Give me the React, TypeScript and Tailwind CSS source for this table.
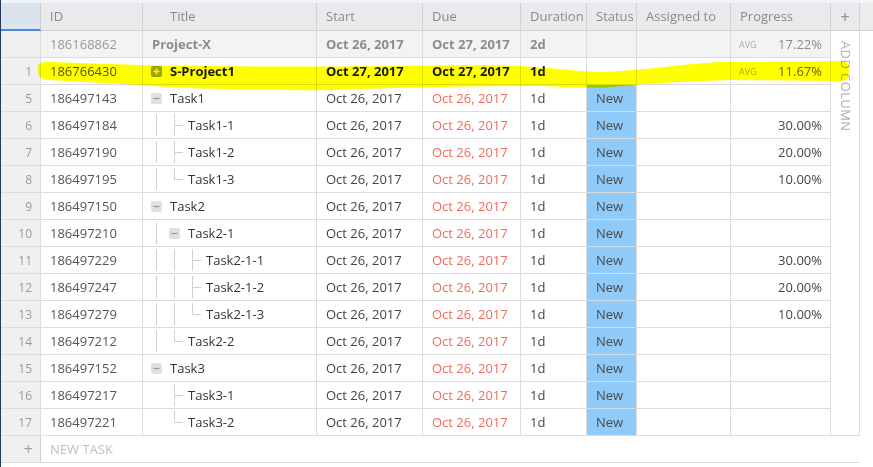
import React from 'react';

type Guide = 'line' | 'tee' | 'corner' | 'none';
type Marker = 'plus' | 'minus' | 'tee' | 'corner';

type Row = {
  num: string;
  id: string;
  title: string;
  guides: Guide[];
  marker?: Marker;
  start: string;
  due: string;
  duration: string;
  status?: string;
  progress?: string;
  avg?: string;
  bold?: boolean;
};

const task = (
  num: string,
  id: string,
  title: string,
  guides: Guide[],
  marker: Marker,
  progress?: string,
): Row => ({
  num,
  id,
  title,
  guides,
  marker,
  start: 'Oct 26, 2017',
  due: 'Oct 26, 2017',
  duration: '1d',
  status: 'New',
  progress,
});

const rows: Row[] = [
  {
    num: '1',
    id: '186766430',
    title: 'S-Project1',
    guides: [],
    marker: 'plus',
    start: 'Oct 27, 2017',
    due: 'Oct 27, 2017',
    duration: '1d',
    avg: '11.67%',
    bold: true,
  },
  task('5', '186497143', 'Task1', [], 'minus'),
  task('6', '186497184', 'Task1-1', ['line'], 'tee', '30.00%'),
  task('7', '186497190', 'Task1-2', ['line'], 'tee', '20.00%'),
  task('8', '186497195', 'Task1-3', ['line'], 'corner', '10.00%'),
  task('9', '186497150', 'Task2', [], 'minus'),
  task('10', '186497210', 'Task2-1', ['line'], 'minus'),
  task('11', '186497229', 'Task2-1-1', ['line', 'line'], 'tee', '30.00%'),
  task('12', '186497247', 'Task2-1-2', ['line', 'line'], 'tee', '20.00%'),
  task('13', '186497279', 'Task2-1-3', ['line', 'line'], 'corner', '10.00%'),
  task('14', '186497212', 'Task2-2', ['line'], 'corner'),
  task('15', '186497152', 'Task3', [], 'minus'),
  task('16', '186497217', 'Task3-1', ['none'], 'tee'),
  task('17', '186497221', 'Task3-2', ['none'], 'corner'),
];

const cell =
  'flex h-full shrink-0 items-center overflow-hidden whitespace-nowrap border-r border-[#dcdcdc] pt-px';
const headCell =
  'flex h-full shrink-0 items-center whitespace-nowrap border-r border-b border-[#d2d2d2] bg-[#e9eaeb] pt-px';

// tree connector for one indent slot
const TreeLine = ({ kind, width }: { kind: Guide; width: number }) => (
  <svg width={width} height={26} className="-mt-px shrink-0">
    {kind !== 'none' && (
      <line x1={5.5} x2={5.5} y1={2} y2={kind === 'corner' ? 13.5 : 24} stroke="#d0d0d0" />
    )}
    {(kind === 'tee' || kind === 'corner') && (
      <line x1={5.5} x2={14} y1={13.5} y2={13.5} stroke="#d0d0d0" />
    )}
  </svg>
);

const ToggleBox = ({ open }: { open: boolean }) => (
  <svg width={11} height={11} className="mr-2 shrink-0">
    <rect width={11} height={11} rx={2} fill={open ? '#dfe0e2' : '#9da2a7'} />
    {open ? (
      <path d="M2.5 5.5h6" stroke="#90959b" strokeWidth={1.2} />
    ) : (
      <path d="M2.5 5.5h6M5.5 2.5v6" stroke="#fff" strokeWidth={1.5} />
    )}
  </svg>
);

const TitleCell = ({ row }: { row: Row }) => (
  <div className={`${cell} w-[174px] pl-2`}>
    {row.guides.map((g, i) => (
      <TreeLine key={i} kind={g} width={18} />
    ))}
    {row.marker === 'plus' && <ToggleBox open={false} />}
    {row.marker === 'minus' && <ToggleBox open />}
    {(row.marker === 'tee' || row.marker === 'corner') && <TreeLine kind={row.marker} width={19} />}
    <span className={row.bold ? 'font-bold text-[#1a1a1a]' : 'text-[#333]'}>{row.title}</span>
  </div>
);

const DataRow = ({ row }: { row: Row }) => (
  <div className="flex h-[27px] border-b border-[#dcdcdc]">
    <div className={`${cell} w-[40px] justify-end border-[#cfcfcf] bg-[#f0f0f0] pr-2 text-[12px] text-[#9a9a9a]`}>
      {row.num}
    </div>
    <div className={`${cell} w-[102px] pl-[9px] text-[#555]`}>{row.id}</div>
    <TitleCell row={row} />
    <div className={`${cell} w-[106px] pl-[9px] ${row.bold ? 'font-bold text-[#1a1a1a]' : 'text-[#444]'}`}>
      {row.start}
    </div>
    <div className={`${cell} w-[98px] pl-[9px] ${row.bold ? 'font-bold text-[#1a1a1a]' : 'text-[#f06b5b]'}`}>
      {row.due}
    </div>
    <div className={`${cell} w-[66px] pl-[9px] ${row.bold ? 'font-bold text-[#1a1a1a]' : 'text-[#444]'}`}>
      {row.duration}
    </div>
    <div className={`${cell} w-[50px] pl-[9px] text-[#4a4a4a] ${row.status ? 'bg-[#90caf9]' : ''}`}>
      {row.status}
    </div>
    <div className={`${cell} w-[94px]`} />
    <div className={`${cell} w-[100px] justify-between pl-2 pr-2`}>
      <span className="text-[9px] text-[#aaa]">{row.avg ? 'AVG' : ''}</span>
      <span className={row.avg ? 'text-[#666]' : 'text-[#444]'}>{row.avg ?? row.progress}</span>
    </div>
  </div>
);

const SummaryRow = () => (
  <div className="flex h-[27px] border-b border-[#dcdcdc] bg-[#f3f3f3] text-[#8c8c8c]">
    <div className={`${cell} w-[40px] border-[#cfcfcf] bg-[#f0f0f0]`} />
    <div className={`${cell} w-[102px] pl-[9px] text-[#999]`}>186168862</div>
    <div className={`${cell} w-[174px] pl-[9px] font-bold`}>Project-X</div>
    <div className={`${cell} w-[106px] pl-[9px] font-bold`}>Oct 26, 2017</div>
    <div className={`${cell} w-[98px] pl-[9px] font-bold`}>Oct 27, 2017</div>
    <div className={`${cell} w-[66px] pl-[9px] font-bold`}>2d</div>
    <div className={`${cell} w-[50px]`} />
    <div className={`${cell} w-[94px]`} />
    <div className={`${cell} w-[100px] justify-between pl-2 pr-2`}>
      <span className="text-[9px] text-[#aaa]">AVG</span>
      <span>17.22%</span>
    </div>
  </div>
);

export default function App() {
  return (
    <div className="relative flex h-[467px] w-[873px] flex-col overflow-hidden border-l border-[#26395a] bg-white font-['Open_Sans',sans-serif] text-[13px]">
      <div className="h-[3px] shrink-0 bg-[#f1f3f8]" />

      {/* Header */}
      <div className="flex h-[28px] shrink-0 text-[#8a8a8a]">
        <div className="h-full w-[40px] shrink-0 border-r border-b-2 border-r-[#cfcfcf] border-b-[#4a8ad4] bg-[#dbe3ed]" />
        <div className={`${headCell} w-[102px] pl-[9px]`}>ID</div>
        <div className={`${headCell} w-[174px] pl-[27px]`}>Title</div>
        <div className={`${headCell} w-[106px] pl-[9px]`}>Start</div>
        <div className={`${headCell} w-[98px] pl-[9px]`}>Due</div>
        <div className={`${headCell} w-[66px] pl-[9px]`}>Duration</div>
        <div className={`${headCell} w-[50px] pl-[9px]`}>Status</div>
        <div className={`${headCell} w-[94px] pl-[9px]`}>Assigned to</div>
        <div className={`${headCell} w-[100px] pl-[9px]`}>Progress</div>
        <div className={`${headCell} w-[29px] justify-center text-[16px] font-semibold text-[#999]`}>+</div>
        <div className="h-full flex-1 border-b border-[#d2d2d2] bg-[#ececec]" />
      </div>

      {/* Body */}
      <div className="flex shrink-0">
        <div className="flex w-[830px] flex-col">
          <SummaryRow />
          {rows.map((r) => (
            <DataRow key={r.num} row={r} />
          ))}
        </div>
        <div className="flex w-[29px] shrink-0 justify-center border-r border-b border-[#dcdcdc] pt-[10px]">
          <span className="text-[13px] tracking-[0.4px] text-[#aab1bb] [writing-mode:vertical-rl]">ADD COLUMN</span>
        </div>
      </div>

      {/* New task */}
      <div className="flex h-[27px] w-[859px] shrink-0 border-b border-[#dcdcdc]">
        <div className="flex h-full w-[40px] shrink-0 items-center justify-end border-r border-[#cfcfcf] bg-[#f0f0f0] pr-[7px] text-[16px] text-[#a0a0a0]">
          +
        </div>
        <div className="flex items-center pl-[9px] pt-px text-[#b7bfcc]">NEW TASK</div>
      </div>

      {/* highlighter mark */}
      <svg
        className="pointer-events-none absolute -left-px top-0 mix-blend-multiply"
        width={873}
        height={467}
      >
        <path
          d="M38 67 C38 63 42 62 50 62 L140 65 C220 67 380 67 460 65 C530 64 565 71 600 72 C640 71 680 64 720 62 L840 61 C847 61 850 64 849 70 L848 78 C846 81 842 81 838 81 L730 80 C690 81 650 83 612 87 C590 89 570 87 540 86 C470 86 400 88 330 90 C250 91 180 88 140 85 L50 80 C41 80 38 76 38 71 Z"
          fill="#ffff00"
        />
      </svg>
    </div>
  );
}
